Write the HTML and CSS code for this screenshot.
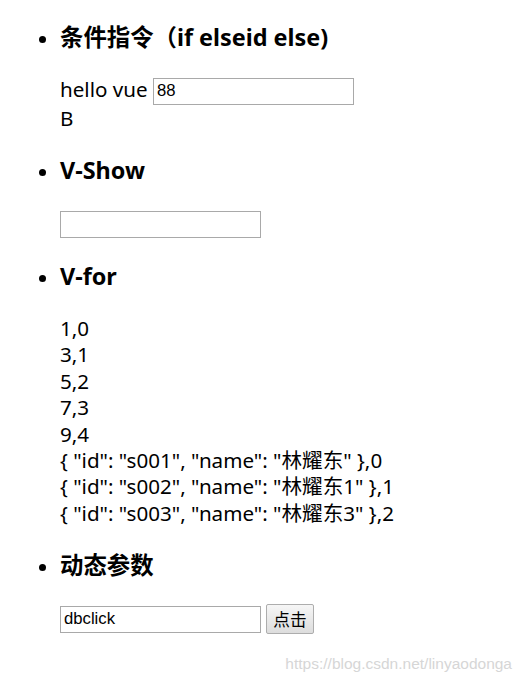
FILE: index.html
```html
<!DOCTYPE html>
<html>
    <head>
      <meta charset="utf-8">
      <title>vue指令</title>
      <link rel="stylesheet" href="styles.css">
    </head>

    <body>
        <div id="app">
            <ul class="demo_list">
                <li>
                    <h3>条件指令（if elseid else)</h3>
                    <div class="demo_body">
                        hello vue <input class="txt_input" type="text" value="88">
                        <div>B</div>
                    </div>
                </li>
                <li>
                    <h3>V-Show</h3>
                    <div class="demo_body">
                        <input class="txt_input" type="text" value="">
                    </div>
                </li>
                <li>
                    <h3>V-for</h3>
                    <div class="demo_body">
                        <div>1,0</div>
                        <div>3,1</div>
                        <div>5,2</div>
                        <div>7,3</div>
                        <div>9,4</div>
                        <div>{ "id": "s001", "name": "林耀东" },0</div>
                        <div>{ "id": "s002", "name": "林耀东1" },1</div>
                        <div>{ "id": "s003", "name": "林耀东3" },2</div>
                    </div>
                </li>
                <li>
                    <h3>动态参数</h3>
                    <div class="demo_body">
                        <input class="txt_input" type="text" value="dbclick">
                        <button class="btn" type="button">点击</button>
                    </div>
                </li>
            </ul>
        </div>
        <div class="watermark">https://blog.csdn.net/linyaodonga</div>
    </body>
</html>
```

FILE: styles.css
```css
html, body{
    margin: 0;
    padding: 0;
}
body{
    position: relative;
    min-height: 687px;
    padding: 10px;
    box-sizing: border-box;
    font-family: "Noto Sans", "Noto Sans CJK SC", sans-serif;
    font-size: 20.6px;
    line-height: 26.4px;
    color: #000;
    background: #fff;
}
.demo_list{
    margin: 0;
    padding-left: 50px;
    list-style: disc;
}
.demo_list h3{
    margin: 12px 0 22.8px;
    font-size: 23.4px;
    line-height: 31px;
    font-weight: bold;
}
.demo_list li + li h3{
    margin-top: 23.6px;
}
.demo_body{
    margin: 0;
}
.txt_input{
    width: 201px;
    height: 27px;
    box-sizing: border-box;
    margin: 0;
    padding: 1px 3px;
    border: 1px solid #a9a9a9;
    font-family: "Liberation Sans", Arial, sans-serif;
    font-size: 16.7px;
    color: #000;
    vertical-align: middle;
    outline: none;
}
.btn{
    height: 30px;
    margin: 0;
    padding: 0 6px;
    border: 1px solid #adadad;
    border-radius: 2px;
    background: linear-gradient(#f6f6f6, #dddddd);
    font-family: "Noto Sans CJK SC", sans-serif;
    font-size: 16.7px;
    color: #000;
    vertical-align: middle;
}
.watermark{
    position: absolute;
    right: 20px;
    bottom: 10px;
    font-family: "Liberation Sans", Arial, sans-serif;
    font-size: 15.5px;
    color: #d6d6d6;
}
```
